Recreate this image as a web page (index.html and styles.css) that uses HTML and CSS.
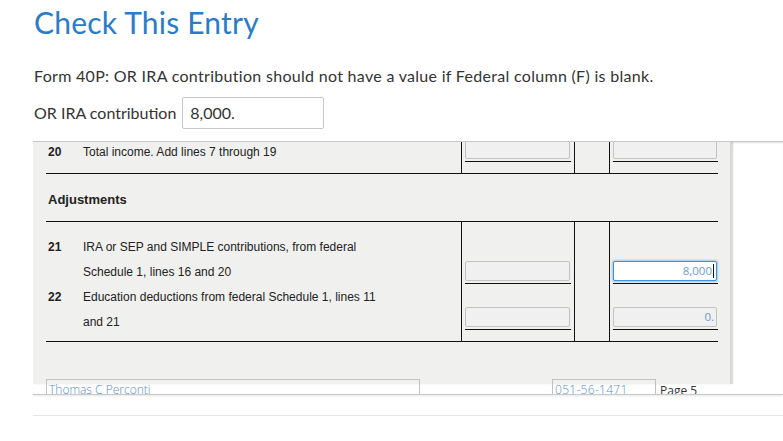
FILE: index.html
```html
<!DOCTYPE html>
<html>
<head>
<meta charset="utf-8">
<link rel="stylesheet" href="styles.css">
</head>
<body>
<div class="wrap">
  <h1 class="title">Check This Entry</h1>
  <p class="msg">Form 40P: OR IRA contribution should not have a value if Federal column (F) is blank.</p>
  <div class="field">
    <span class="field-label">OR IRA contribution</span>
    <span class="field-input">8,000.</span>
  </div>
</div>
<div class="viewer">
  <div class="page">
    <div class="row row20">
      <div class="cell lbl"><span class="num">20</span><span class="txt">Total income. Add lines 7 through 19</span></div>
      <div class="cell amt"><div class="uline"><div class="box"></div></div></div>
      <div class="cell gap"></div>
      <div class="cell amt amt4"><div class="uline"><div class="box"></div></div></div>
    </div>
    <div class="heading">Adjustments</div>
    <div class="row row21">
      <div class="cell lbl"><span class="num">21</span><span class="txt">IRA or SEP and SIMPLE contributions, from federal<br>Schedule 1, lines 16 and 20</span></div>
      <div class="cell amt"><div class="uline"><div class="box"></div></div></div>
      <div class="cell gap"></div>
      <div class="cell amt amt4"><div class="uline"><div class="box focus">8,000<span class="caret"></span></div></div></div>
    </div>
    <div class="row row22">
      <div class="cell lbl"><span class="num">22</span><span class="txt">Education deductions from federal Schedule 1, lines 11<br>and 21</span></div>
      <div class="cell amt"><div class="uline"><div class="box"></div></div></div>
      <div class="cell gap"></div>
      <div class="cell amt amt4"><div class="uline"><div class="box">0.</div></div></div>
    </div>
    <div class="footer">
      <div class="fbox name">Thomas C Perconti</div>
      <div class="fbox ssn">051-56-1471</div>
      <span class="pageno">Page 5</span>
    </div>
  </div>
</div>
<div class="rule"></div>
</body>
</html>
```
FILE: styles.css
```css
html, body { margin: 0; padding: 0; background: #fff; }
body { width: 783px; height: 441px; overflow: hidden; font-family: Lato, "Noto Sans", sans-serif; color: #333; }

.wrap { padding-left: 34px; }
.title {
  margin: 0; padding-top: 3px;
  font-family: Lato, sans-serif; font-weight: 400;
  font-size: 30px; line-height: 38px; color: #2a7cca;
  letter-spacing: 0.2px;
}
.msg { margin: 25px 0 0; font-size: 16px; line-height: 20px; color: #333; letter-spacing: 0.3px; }
.field { display: flex; align-items: center; margin-top: 11px; height: 31px; }
.field-label { font-size: 16px; color: #333; margin-right: 6px; }
.field-input {
  box-sizing: border-box; width: 142px; height: 32px;
  border: 1px solid #c8c8c8; border-radius: 2px;
  padding: 0 7px; font-size: 16px; line-height: 30px; color: #333;
}

.viewer {
  margin-top: 13px; margin-left: 33px; height: 252px; overflow: hidden;
  border-top: 1px solid #c9c9c9; border-bottom: 1px solid #c9c9c9;
  box-shadow: inset 0 2px 2px -1px rgba(0,0,0,0.12), 0 2px 2px -1px rgba(0,0,0,0.10);
  position: relative;
}
.page {
  width: 698px; height: 100%; background: #f0f0ef;
  box-shadow: 2px 0 1px rgba(0,0,0,0.14);
  border-right: 1px solid #d6d6d6; box-sizing: border-box;
  padding-left: 13px;
  font-family: "Liberation Sans", Arial, sans-serif; font-size: 12px; color: #222;
}

.row { display: grid; grid-template-columns: 415px 113px 35px 109px; border-bottom: 1px solid #111; width: 672px; }
.cell { box-sizing: border-box; }
.amt, .gap, .amt4 { border-left: 1px solid #111; }
.amt { display: flex; flex-direction: column; justify-content: flex-end; padding: 0 3px 0 3px; }
.amt4 { padding: 0 0 0 3px; }
.uline { border-bottom: 1px solid #111; padding-bottom: 2px; }
.box {
  box-sizing: border-box; height: 20px; margin-right: 1px;
  background: #f0f0f0; border: 1px solid #c2c2c2; border-radius: 2px;
  text-align: right; padding: 0 2px; font-family: "Open Sans", sans-serif; font-size: 11.5px; line-height: 18px; color: #6a9bc9;
}
.box.focus {
  background: #fff; border-color: #3a93de;
  box-shadow: 0 0 2px 1px rgba(90,165,230,0.55);
  padding-right: 2px;
}
.caret { display: inline-block; width: 1px; height: 14px; background: #111; vertical-align: -3px; margin-left: 1px; }

.lbl { display: flex; padding-left: 2px; }
.num { width: 35px; font-weight: 700; flex: none; }
.txt { flex: 1; }

.row20 { margin-top: -10px; height: 41px; }
.row20 .lbl { padding-top: 13px; line-height: 14px; }
.row20 .amt { padding-bottom: 11px; }
.row20 .amt .box { height: 22px; }

.heading {
  width: 672px; height: 48px; box-sizing: border-box; border-bottom: 1px solid #111;
  font-weight: 700; font-size: 13px; line-height: 51px; padding-left: 2px; color: #222;
}
.row21 { border-bottom: none; }
.row21 .lbl { padding-top: 13px; line-height: 25px; }
.row21 .amt { padding-bottom: 1px; }
.row22 .lbl { padding-bottom: 7px; line-height: 24.5px; }
.row22 .amt { padding-bottom: 11px; }

.footer { display: flex; align-items: flex-start; margin-top: 37px; }
.fbox {
  box-sizing: border-box; height: 22px; border: 1px solid #c2c2c2; border-bottom: none;
  font-family: "Open Sans", sans-serif; font-size: 12px; line-height: 19px; color: #5b8ec4;
  padding-left: 2px; font-weight: 300;
}
.name { width: 374px; }
.ssn { width: 104px; margin-left: 132px; letter-spacing: 0.3px; }
.pageno { margin-left: 4px; margin-top: 4px; font-family: "Open Sans", sans-serif; font-size: 12px; line-height: 16px; color: #333; }

.rule { margin: 20px 0 0 33px; height: 1px; background: #e7e7e7; }
```
